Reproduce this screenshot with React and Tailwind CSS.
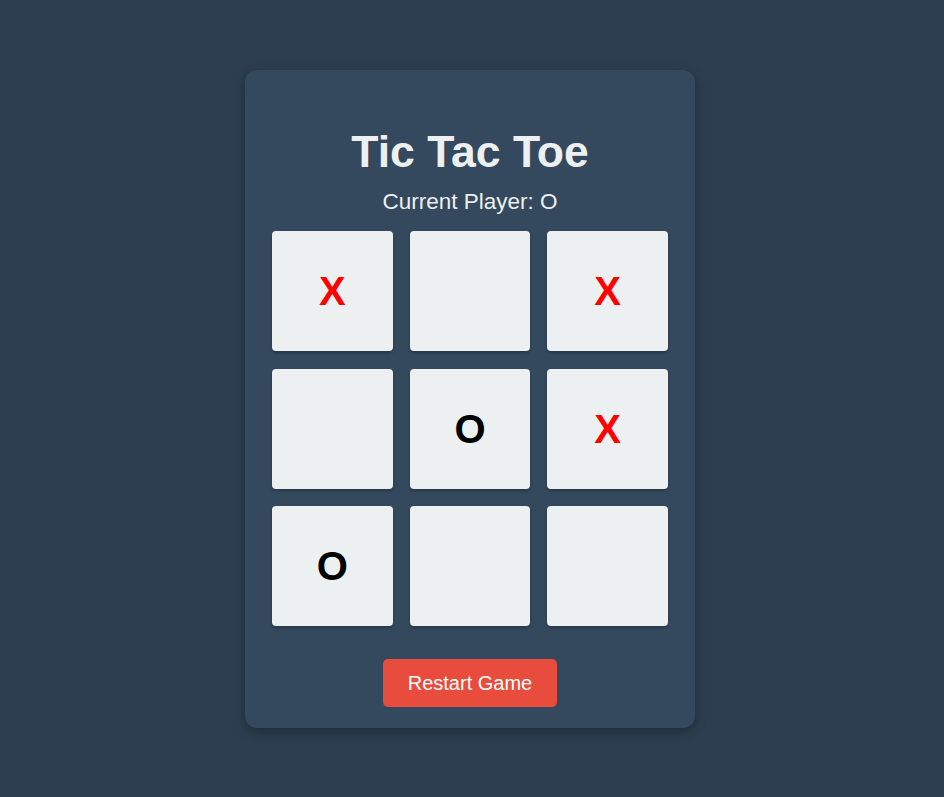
// Tic Tac Toe board - static snapshot of a game in progress

const board = ["X", "", "X", "", "O", "X", "O", "", ""]

const Cell = ({ value }) => (
    <button
        className={`h-[120px] flex items-center justify-center rounded-[4px] bg-[#ecf0f1] shadow-[0_2px_3px_rgba(0,0,0,0.25)] text-[40px] font-bold leading-none ${
            value === "X" ? "text-[#ff0000]" : "text-black"
        }`}
    >
        {value}
    </button>
)

const App = () => {
    return (
        <div
            className="min-h-screen w-full bg-[#2c3e50] flex justify-center pt-[70px] pr-[4px]"
            style={{ fontFamily: '"Liberation Sans", Arial, sans-serif' }}
        >
            <div className="w-[450px] h-[658px] bg-[#34495e] rounded-[12px] shadow-[0_4px_12px_rgba(0,0,0,0.3)] flex flex-col items-center pt-[56px] px-[27px]">
                <h1 className="text-[44.5px] font-bold text-[#ecf0f1] leading-[1.15]">
                    Tic Tac Toe
                </h1>
                <p className="mt-[12px] text-[22.5px] text-[#ecf0f1] leading-[1.15]">
                    Current Player: O
                </p>

                {/* BOARD */}
                <div className="mt-[16px] w-[396px] grid grid-cols-3 gap-x-[17px] gap-y-[17.5px]">
                    {board.map((v, i) => (
                        <Cell key={i} value={v} />
                    ))}
                </div>

                <button className="mt-[33px] h-[48px] px-[25px] rounded-[5px] bg-[#e74c3c] text-white text-[20px]">
                    Restart Game
                </button>
            </div>
        </div>
    )
}

export default App
